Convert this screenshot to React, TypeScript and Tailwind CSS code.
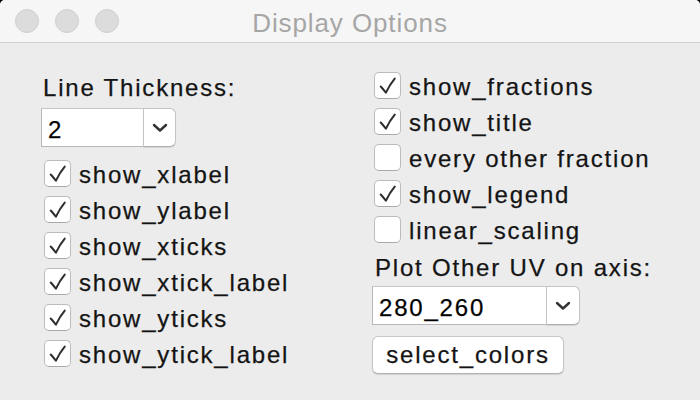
import React from "react";

// ------------------------
// Types
// ------------------------
interface Option {
  label: string;
  checked: boolean;
}

const leftOptions: Option[] = [
  { label: "show_xlabel", checked: true },
  { label: "show_ylabel", checked: true },
  { label: "show_xticks", checked: true },
  { label: "show_xtick_label", checked: true },
  { label: "show_yticks", checked: true },
  { label: "show_ytick_label", checked: true },
];

const rightOptions: Option[] = [
  { label: "show_fractions", checked: true },
  { label: "show_title", checked: true },
  { label: "every other fraction", checked: false },
  { label: "show_legend", checked: true },
  { label: "linear_scaling", checked: false },
];

const font = "font-['Liberation_Sans',Arial,sans-serif]";

export default function App() {
  return (
    <div className={`w-[700px] h-[400px] bg-black ${font}`}>
      <div className="w-full h-full bg-[#ececec] rounded-t-[5px] overflow-hidden flex flex-col">
        {/* Title bar */}
        <div className="relative h-[43px] shrink-0 bg-[#f6f6f6] border-b border-[#d1d1d1] flex items-center justify-center">
          <div className="absolute left-[15px] top-[9px] flex gap-[16px]">
            <span className="w-[24px] h-[24px] rounded-full bg-[#dcdcdc] border border-[#d0d0d0]" />
            <span className="w-[24px] h-[24px] rounded-full bg-[#dcdcdc] border border-[#d0d0d0]" />
            <span className="w-[24px] h-[24px] rounded-full bg-[#dcdcdc] border border-[#d0d0d0]" />
          </div>
          <span className="mt-[4px] text-[26px] leading-[30px] tracking-[0.9px] text-[#a6a6a6]">
            Display Options
          </span>
        </div>

        {/* Body */}
        <div className="flex flex-1 text-[24px] tracking-[1.8px] text-[#141414] [-webkit-text-stroke:0.25px_#141414]">
          {/* Left column */}
          <div className="w-[372px] pl-[41px] pt-[32px] flex flex-col">
            <span className="pl-[2px] leading-[26px]">Line Thickness:</span>
            <Combo value="2" width="w-[135px]" entry="w-[102px]" className="mt-[7px]" />
            <div className="mt-[8px] pl-[3px] flex flex-col">
              {leftOptions.map((o) => (
                <CheckRow key={o.label} option={o} />
              ))}
            </div>
          </div>

          {/* Right column */}
          <div className="pt-[24px] flex flex-col">
            <div className="pl-[2px] flex flex-col">
              {rightOptions.map((o) => (
                <CheckRow key={o.label} option={o} />
              ))}
            </div>
            <span className="mt-[8px] pl-[3px] leading-[26px]">Plot Other UV on axis:</span>
            <Combo value="280_260" width="w-[208px]" entry="w-[174px]" className="mt-[5px]" />
            <button className="mt-[11px] w-[192px] h-[38px] rounded-[6px] bg-white border border-[#c6c6c6] border-b-[#b2b2b2] shadow-[0_1px_1px_rgba(0,0,0,0.12)] flex items-center justify-center leading-[26px] text-[#141414] tracking-[1.8px]">
              select_colors
            </button>
          </div>
        </div>
      </div>
    </div>
  );
}

// ---------------------------
// Checkbox Row
// ---------------------------
function CheckRow({ option }: { option: Option }) {
  return (
    <div className="h-[36px] flex items-center gap-[8px]">
      <span className="w-[27px] h-[27px] shrink-0 rounded-[5px] bg-white border border-[#bcbcbc] border-b-[#a9a9a9] flex items-center justify-center">
        {option.checked && (
          <svg width="27" height="27" viewBox="0 0 27 27" fill="none">
            <path
              d="M6.2 14.6 C8 16.5 10 19 11.8 21.2 C14.5 15.5 17.5 10.5 21.3 6"
              stroke="#2e2e2e"
              strokeWidth="2.2"
              strokeLinecap="round"
              strokeLinejoin="round"
            />
          </svg>
        )}
      </span>
      <span className="mt-[4px] leading-[26px] whitespace-nowrap">{option.label}</span>
    </div>
  );
}

// ---------------------------
// Combobox
// ---------------------------
interface ComboProps {
  value: string;
  width: string;
  entry: string;
  className?: string;
}

function Combo({ value, width, entry, className }: ComboProps) {
  return (
    <div className={`${width} h-[39px] flex ${className ?? ""}`}>
      <div
        className={`${entry} h-full bg-white border border-[#b8b8b8] border-t-[#c8c8c8] border-r-0 pl-[6px] flex items-center text-black`}
      >
        <span className="mt-[5px] leading-[26px]">{value}</span>
      </div>
      <div className="flex-1 h-full bg-white border border-[#c4c4c4] border-b-[#adadad] rounded-r-[6px] shadow-[0_1px_1px_rgba(0,0,0,0.1)] flex items-center justify-center">
        <svg width="16" height="10" viewBox="0 0 16 10" fill="none">
          <path
            d="M2 2 L8 7.5 L14 2"
            stroke="#333"
            strokeWidth="2.4"
            strokeLinecap="round"
            strokeLinejoin="round"
          />
        </svg>
      </div>
    </div>
  );
}
